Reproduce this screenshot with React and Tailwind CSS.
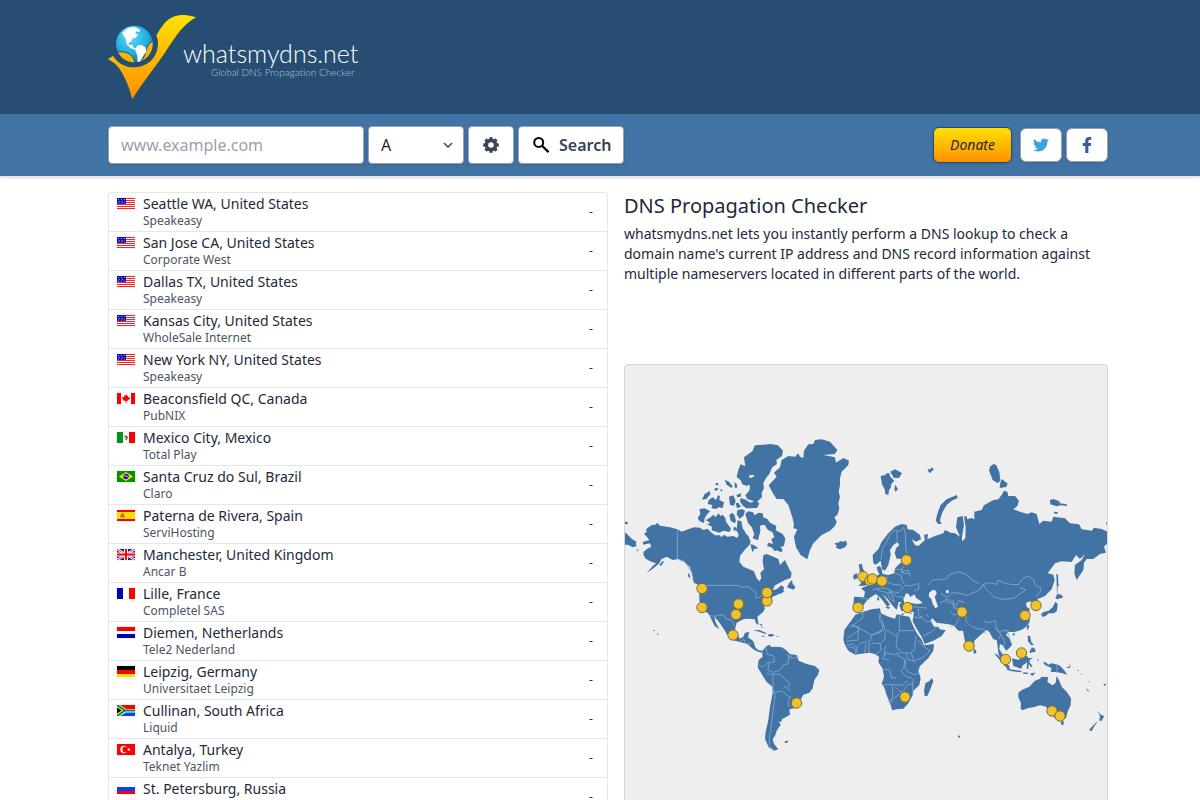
import { FaFacebookF, FaTwitter } from "react-icons/fa";

const servers = [
  ["us", "Seattle WA, United States", "Speakeasy"],
  ["us", "San Jose CA, United States", "Corporate West"],
  ["us", "Dallas TX, United States", "Speakeasy"],
  ["us", "Kansas City, United States", "WholeSale Internet"],
  ["us", "New York NY, United States", "Speakeasy"],
  ["ca", "Beaconsfield QC, Canada", "PubNIX"],
  ["mx", "Mexico City, Mexico", "Total Play"],
  ["br", "Santa Cruz do Sul, Brazil", "Claro"],
  ["es", "Paterna de Rivera, Spain", "ServiHosting"],
  ["gb", "Manchester, United Kingdom", "Ancar B"],
  ["fr", "Lille, France", "Completel SAS"],
  ["nl", "Diemen, Netherlands", "Tele2 Nederland"],
  ["de", "Leipzig, Germany", "Universitaet Leipzig"],
  ["za", "Cullinan, South Africa", "Liquid"],
  ["tr", "Antalya, Turkey", "Teknet Yazlim"],
  ["ru", "St. Petersburg, Russia", "Rostelecom"],
];

const flags = {
  us: (
    <>
      <path fill="#fff" d="M0 0h18v11H0z" />
      <path fill="#f22" d="M0 0h18v1H0zM0 2h18v1H0zM0 4h18v1H0zM0 6h18v1H0zM0 8h18v1H0zM0 10h18v1H0z" />
      <path fill="#1414a8" d="M0 0h9v6H0z" />
      <path stroke="#8f9ee8" strokeDasharray="1 2" d="M1 1.5h7M2 3.5h6M1 5h7" />
    </>
  ),
  ca: (
    <>
      <path fill="#fff" d="M0 0h18v11H0z" />
      <path fill="#f00" d="M0 0h4v11H0zM14 0h4v11h-4zM9 1l1 2 1-.5v2l2-.5-.5 2-2 2-1-.2V10h-1V7.800l-1 .2-2-2L5 4l2 .5v-2L8 3z" />
    </>
  ),
  mx: (
    <>
      <path fill="#fff" d="M0 0h18v11H0z" />
      <path fill="#009321" d="M0 0h6v11H0z" />
      <path fill="#f00" d="M12 0h6v11h-6z" />
      <path fill="#7b6a40" d="M7 5l2-2 2 2-1 3H8l1-2z" />
    </>
  ),
  br: (
    <>
      <path fill="#009300" d="M0 0h18v11H0z" />
      <path fill="#ffe000" d="M9 1l7 4.500L9 10 2 5.500z" />
      <circle cx="9" cy="5.500" r="2.800" fill="#1414a8" />
      <path stroke="#fff" strokeWidth=".8" fill="none" d="M6.500 5q3-1 5 1.500" />
    </>
  ),
  es: (
    <>
      <path fill="#f00" d="M0 0h18v11H0z" />
      <path fill="#ffdf00" d="M0 2h18v7H0z" />
      <path fill="#c66a3c" d="M4 4l1.500-1L7 4l1 3.500H3z" />
    </>
  ),
  gb: (
    <>
      <path fill="#1414a8" d="M0 0h18v11H0z" />
      <path stroke="#fff" strokeWidth="2.400" d="M0 0l18 11M18 0L0 11" />
      <path stroke="#f00" strokeWidth=".8" d="M0 0l18 11M18 0L0 11" />
      <path stroke="#fff" strokeWidth="4" d="M9 0v11M0 5.500h18" />
      <path stroke="#f00" strokeWidth="2" d="M9 0v11M0 5.500h18" />
    </>
  ),
  fr: (
    <>
      <path fill="#fff" d="M0 0h18v11H0z" />
      <path fill="#0000b4" d="M0 0h6v11H0z" />
      <path fill="#f00" d="M12 0h6v11h-6z" />
    </>
  ),
  nl: (
    <>
      <path fill="#fff" d="M0 0h18v11H0z" />
      <path fill="#f00" d="M0 0h18v4H0z" />
      <path fill="#0000b4" d="M0 7h18v4H0z" />
    </>
  ),
  de: (
    <>
      <path fill="#000" d="M0 0h18v4H0z" />
      <path fill="#f00" d="M0 4h18v4H0z" />
      <path fill="#ffdf00" d="M0 8h18v3H0z" />
    </>
  ),
  za: (
    <>
      <path fill="#fff" d="M0 0h18v11H0z" />
      <path fill="#f00" d="M3 0h15v4H9z" />
      <path fill="#04f" d="M3 11h15V7.500H9z" />
      <path stroke="#009321" strokeWidth="2" fill="none" d="M0 0l8 5.500L0 11M8 5.500h10" />
      <path fill="#ffdf00" d="M0 1.500l6 4-6 4z" />
      <path fill="#000" d="M0 2.500l4.500 3L0 8.500z" />
    </>
  ),
  tr: (
    <>
      <path fill="#f00" d="M0 0h18v11H0z" />
      <circle cx="7" cy="5.500" r="3.700" fill="#fff" />
      <circle cx="8.300" cy="5.500" r="2.900" fill="#f00" />
      <path fill="#fff" d="M10 5.500l1.200-.5.300-1.200.8 1 1.200-.2-.7.900.7 1-1.200-.2-.8.900-.3-1.200z" />
    </>
  ),
  ru: (
    <>
      <path fill="#fff" d="M0 0h18v11H0z" />
      <path fill="#04f" d="M0 4h18v4H0z" />
      <path fill="#f00" d="M0 8h18v3H0z" />
    </>
  ),
};

const markers = [
  [702, 588.5], [702, 607.5], [738.5, 604], [736, 614.5], [767, 601], [767, 592.5],
  [733, 635], [796.5, 703], [858, 607.5], [863, 576.5], [870, 580.5], [872.5, 579],
  [882, 581], [906.5, 560], [907.5, 607.5], [905, 697], [962, 612], [969, 646],
  [1025, 615.5], [1036, 605.5], [1005.5, 659.5], [1021.5, 653], [1052, 711], [1060, 716],
];

function WorldMap() {
  return (
    <svg className="block w-full" viewBox="625 365 482 450" role="img" aria-label="World map of DNS servers">
      <g transform="translate(620 430) scale(.33333)" fill="#4173a4">
        {/* North and Central America */}
        <path d="M72 312L80 305 78 298 95 285 106 284 112 278 120 287 150 292 172 298 185 305 205 298 222 292 240 293 250 300 262 296 275 308 285 316 300 316 304 322 312 314 322 320 340 318 352 324 358 310 368 302 385 318 392 335 388 345 372 362 360 378 358 395 370 410 388 418 402 424 410 445 418 454 424 445 421 428 432 418 428 395 430 375 440 372 460 380 475 387 480 405 495 390 508 418 515 430 512 444 495 450 480 458 465 466 458 480 470 478 484 466 492 472 490 482 472 494 458 500 445 515 432 527 435 535 430 545 412 560 416 585 408 580 404 568 385 566 370 568 350 578 345 598 352 615 360 626 370 620 375 608 388 606 384 622 400 634 406 652 414 660 427 662 424 668 410 664 398 656 382 642 360 636 345 632 320 612 310 595 295 574 283 560 286 575 298 598 284 588 275 570 268 555 262 548 245 540 238 510 238 478 232 462 218 440 210 412 192 395 175 387 158 390 140 380 124 388 118 400 104 412 80 430 96 410 108 400 90 394 75 385 70 366 82 356 94 350 90 340 70 344 68 336 88 330 82 322z" />
        {/* South America */}
        <path d="M426 664L440 648 450 644 452 651 465 650 485 652 498 660 510 672 530 675 536 692 560 702 585 708 598 720 594 734 583 750 578 775 568 788 550 794 540 812 525 834 508 838 510 854 486 868 484 876 476 874 482 884 470 902 466 915 458 928 462 942 475 958 462 962 445 950 435 926 437 905 445 870 450 830 458 790 457 770 440 756 430 740 413 712 416 690 428 680z" />
        {/* Caribbean, Hawaii, Falklands, Aleutians */}
        <path d="M400 602l16-3 16 7 8 4-4 2-22-8zM445 613l12-1 7 4-10 4-10-2zM470 618h6v2h-6zM425 617h8v3h-7zM420 583l4-2 3 4-4 2zM424 589h3v4h-3zM99 602l4-2 3 2-3 2zM110 610l5 2 1 3-4-1zM492 937l6-5 8 1-5 6zM14 274l8 2 2 6-10 1zM14 306l10 9 12 12 14 9-3 6 3 6-12 4-14-8-10 0zM48 357l8 3-3 4zM70 370l7 4-6 5zM118 405l10-12 4 2-9 13zM204 430l5 2 2 13-6-4zM216 442l15 12 5 10-14-5z" />
        {/* Canadian Arctic archipelago */}
        <path d="M372 82l25-18 8-18 27-2 18-2 24 4 15 16-3 16-17 12 2 12-14 10-9 20-10 12-8 15 2 16-7 13 1 14-16 14-17-5-11-4-6-12 12-13 2-15-15-9-1-10 25-6 5-6-10-1-14 3zM362 103l14 6 2 14 9 10 2 21-7 15-15-6-5-12-12-10 5-22zM344 157l6 4 2 12-8 0zM314 149l13 6 11 14-4 5-14-10zM288 159l7 1-1 6-8-1zM282 177l8-4 6 4-8 6zM246 209l8-17 16-9 1 10-12 14zM266 210l12-8 10 8 6-14 6 2-2 12 14 7-4 17-12-2-8 5-14-2 3-10-14-3zM300 177l7 2-2 8zM327 200l13-4 7 16-5 15-12-2zM349 195l14-5-1 10-10 2zM362 204l15 5 14 9 19-7 8 10-7 13-31 1-10-6-10-14zM347 220l8-2 8 12-12 5zM238 237l16-2 17 9-9 8-8 13-2 14-13-5-6-10 8-12zM270 263l10-9 7 8 8-12 7 8 6-4 8 10 2 11 15 21-4 10-18-4-14 6-22-7 1-11-15-7 10-4-14-9zM328 256l8-8 7 6 5 19-4 7-12-8zM352 241l14-4 9 5-5 16-12 8-8-14zM352 271l12 3 4 21 10 15-7 11-13-4-9-16 3-19zM376 252l8-8 14 2 6 10 12-8 12 2 2 12 12 5 8 11 19 10-2 13 20 10 9 14-4 23-10 2 6 12-4 5-14-6-6 2-10-11-13-4 4-10 14 4-5-14 9-7-6-15-14-7-9-15-14 3 1 17-7 27-16-6 5-13-8-21-11-12zM391 342l12 4 12 9-12 2-6 10zM340 292l8 0 2 9-9 1z" />
        {/* Newfoundland and Nova Scotia */}
        <path d="M501 472L507 460 516 450 518 462 526 470 522 479 512 476zM470 486L484 480 494 484 482 491 474 492z" />
        <g transform="translate(480 0)">
          {/* Greenland, Iceland, Svalbard, Novaya Zemlya, Russian Arctic */}
          <path d="M5 90L25 78 45 80 55 70 60 80 70 84 72 62 85 43 100 42 105 30 125 28 150 35 172 60 165 72 130 75 165 82 168 98 190 84 207 92 205 105 185 125 180 145 180 165 176 185 180 200 175 220 178 235 172 255 163 262 170 275 165 288 150 302 125 315 100 340 90 360 82 388 62 375 48 352 42 320 52 298 40 295 42 284 38 265 25 225 10 207 -10 207 -20 192 -34 166 -10 140 -18 128 0 112z" />
          <path d="M163 340l15-3 2-4 8 2 9-3 5 10-7 10-15 6-12-5 2-6zM302 138l14-3 4-5 8 0 3 10 12 12-9 10-2 12-5 6-2 15-9-3-2-14-8-15zM331 125l14-7 21 11-9 15-16-1zM346 164l8 14-8 7-3-8zM443 118l8 0 5-6 6 8-7 2-2 7-7-3zM530 195L533 204 515 212 500 225 488 245 482 262 480 272 485 282 475 282 467 272 473 248 482 225 500 208z" />
          <path d="M627 121l4-12 10-7 8 4 9 20 3 27-9 6-14-9zM665 147l7 5 11 9-4 10-20 3 2-16zM810 210l10-3 19 7 0 6 21 3 2 5-20-2-12 3-19-6zM822 245l12 2-3 5-9-2zM979 276l8 3 0 5-8 0z" />
          {/* Eurasia */}
          <path d="M280 400L278 375 295 358 305 335 325 310 345 290 365 282 380 285 383 298 400 300 420 315 423 328 408 335 395 328 405 345 415 348 435 330 432 315 444 312 442 328 465 318 490 310 495 300 512 308 525 310 540 320 528 292 532 262 548 258 552 285 546 320 546 334 556 325 557 290 552 260 559 258 562 268 574 264 583 268 583 245 605 240 612 226 640 210 655 208 665 195 672 182 682 185 685 198 705 198 717 212 712 228 700 238 720 245 742 252 755 247 770 252 778 282 790 272 815 275 820 260 855 265 870 280 897 283 905 298 935 302 942 293 965 297 982 305 982 340 972 350 978 368 960 372 940 387 920 387 912 398 910 420 890 450 883 430 885 405 905 390 915 372 900 387 888 375 875 396 845 394 825 400 803 430 820 434 824 450 815 478 795 498 772 508 776 520 778 532 768 538 762 524 752 514 738 518 740 530 750 538 744 552 750 572 742 588 724 600 702 606 686 606 678 614 690 628 696 645 688 654 678 662 670 648 660 642 658 658 674 682 682 698 670 692 656 675 653 650 650 630 640 628 628 606 620 600 605 612 583 632 582 655 570 665 555 635 549 602 535 602 520 586 500 582 470 578 456 564 452 572 462 590 474 590 480 598 497 601 485 618 460 632 434 642 425 620 410 596 398 574 402 545 385 545 364 542 358 526 364 516 356 516 350 540 336 524 322 506 306 490 330 524 322 530 304 506 288 492 274 500 262 510 250 526 243 538 225 542 220 525 222 500 252 502 255 485 243 475 268 465 282 445 298 432 295 415 303 410 308 432 325 435 343 430 345 415 362 398 378 397 362 386 350 386 344 370 348 355 358 345 352 337 340 345 330 360 332 375 325 405 315 422 306 418 302 392 288 404z" />
          {/* British Isles, Denmark, Mediterranean islands */}
          <path d="M236 403l10-1 2 12 6 14 14 18 3 15-18 6-18 1 9-10-6-12 4-8zM221 435l9-6 3 15-10 5-4-7zM290 412l9-5 2 18-6 4zM295 499l3 10-4 4-3-6zM317 530l13 1-3 6-10-4zM364 551l9-1-2 4-7 0zM388 550l8-2-4 5z" />
          {/* Japan, Sakhalin, Kurils */}
          <path d="M829 433l5 0 1 28 4 7-6-2-1 26 12 2 6 8-18 6-6-4 5-10zM826 515L833 522 831 542 822 550 806 550 797 558 782 556 790 546 806 542 818 532zM785 549l7 1 1 10-5 2zM742 588l4-4 2 3-4 13-4-3zM697 612l7-4 0 7-5 2z" />
          {/* Philippines, Indonesia, New Guinea */}
          <path d="M743 618l7-1 4 20 8 7-8 2-10-12zM756 652l10 5 0 9-11 1-3 3-4-4zM642 670L652 674 670 690 688 708 690 722 680 714 664 696zM680 716l20 3 24 4 0 4-28-3-15-5zM696 685L716 690 730 676 745 680 738 700 728 706 724 716 700 708zM737 690l5-5 18-2-10 6-2 8 10 12-4 3-8-10-1 15-5-1 1-17zM730 727l14 1-1 4-14-1zM752 730l14-2-8 9-6-2zM772 686l4 3-3 6zM788 696L800 698 804 704 816 700 838 706 850 718 862 734 842 728 826 726 812 726 815 714 796 706zM868 702l3 4-4-1zM866 710l8-3-6 7-10 0zM892 718l6 5-4 0zM902 728l6 6-5-2zM582 655l8 9-4 7-6-2z" />
          {/* Australia and New Zealand */}
          <path d="M715 788L725 780 748 770 765 752 780 746 785 740 805 742 802 756 818 766 827 758 830 738 838 752 845 770 860 785 873 805 872 825 863 845 858 864 845 872 825 864 810 850 798 830 780 826 760 832 745 834 728 841 722 836 723 820 715 802zM842 875L852 873 850 886 844 884zM952 842L962 854 973 858 965 872 958 872 960 858zM954 872L942 890 935 904 927 900 940 886zM926 752l3 5-4-1zM918 774l9 8-3 3zM970 765l7-5 1 5-5 3zM534 916l6 2-1 5-5-1z" />
          {/* Africa and Madagascar */}
          <path d="M226 554L250 545 275 538 300 535 303 550 325 560 345 566 350 553 375 558 388 560 400 590 412 612 424 628 432 646 462 642 460 662 445 684 420 708 415 722 422 744 418 765 400 782 398 796 385 820 370 836 350 838 337 841 330 820 320 796 312 770 305 762 312 740 308 716 295 696 297 680 285 672 268 668 245 671 225 674 205 662 195 645 190 630 193 600 215 570zM456 744L460 754 451 778 442 798 434 798 432 783 436 760 448 753z" />
          {/* Inland seas */}
          <path fill="#eee" d="M370 508l8-18 8 2 5 9 12-8 5 10 14 10 6 7-18 2-18-3-18 4zM448 488l10-9 10 3 2 10-6 8 6 18 4 12-8 5-8-14-4-14-8-8zM497 482l8-3 2 8-7 4z" />
        </g>
        {/* National borders */}
        <g fill="none" stroke="#87abd0" strokeWidth="2.500" strokeLinejoin="round">
          <path d="M172 298v87l10 8 6-4 12 14 8 14 10 14M240 466h112l14 6 18-2 14 10 10 8 1 16 10-2 12-10M270 557l16 2 10 -3 14-2 10 14 14 2 10 18" />
          <path d="M362 632l10-3 4 10M382 640l12 2M438 655l4 18 18 4 4 18-18 4-2 22 16 6 20-6 10-16 14-4 4-30M416 705l14 6 16-16M440 730l18 4 20-2 16 14 14 12 0 14M456 785l10 2 20-4 16 14 10 4M458 735l2 50 6 10-6 40-6 50-6 40 0 22 14 14M490 775l8-6 14 16M512 800l-8 14 4 18M500 673l10 12 26-3M517 672l-4 10" />
          <g transform="translate(480 0)">
            <path d="M303 390l4-35 12-18 12-25 14-12 16 4 10-12 6 24 0 40 4 14M350 305l2 30M345 418h20l4 14 20-2M345 430l20 8 0 12 12 18 20-2 18-6 2 16-14 6M320 438l2 18 20 8 16 0 12 10-14 14-16-2-14-8-16-4-20 2-12 4M290 478l16 6 16 4 14 0 14 12 24 2M328 480l10 22M322 490l8 16 14 10M340 500l0 16M445 465l14-16 26 0 18-4 2-10 30-10 24 8 16 16 22 12M370 408l-6 20 20-8 8 20M240 503l14 3 14 2" />
            <path d="M609 464l16-6 26 5 4-13 20 10 22 4 18 0 14-18 14-8 18 10 4 18 18 8-2 12-14 14M609 464l14 18 18 18 24 8 36-3 36-25-18-8M609 464l-8 14-16 8-24 10-20-6-24-2-16 14-20-12M494 506l18 6 18 14 6-14 18 6M520 510l0 22 20 12 8-8M480 520l12-8 22 8 14 14 18 6M510 545l12 10 20-8M548 545l10 10 0 20 16 14 20 8 18 0 4 14M538 560l-10 24-16 6M612 574l16 4 18-6 2 20 14 20 12 22-4 18M646 594l12 14 14-8 14 12 4 18 4 8M662 615l-6 12M674 600l14 4M395 530l20 2 26 2M415 535l0 20 24 20 18-2M440 552l6 10M400 560l16 4 12-6M429 618l28-14 12-12M831 701v26" />
            <path d="M250 545l-4 20-20 16-12 6M212 590h24v12l-36 24M218 585l58 30 38-18-14-44M236 590l-2 40-36 4M300 550l-2 18 10 20-4 18-28 9M276 615l-6 18-28 6-14 14M358 558v44h46M318 600l32 18 6-14M316 600l-2 28-14 14M198 646l20-4 14 12-6 18M206 650l16 4 10 16M258 640l-4 28M268 638l-2 30M274 640l26 0 4 20-18 14M318 647l-6 20 4 10M352 618l-4 30 18 20 24 2 14-12 4-40M362 668l-22 6-24-6-8 18 20 4M394 670l8 24 28-12 20-20-22-14-14-18M402 694l-18-6-6-18M378 690l-4 20 8 14 20 10 14-4M350 674l24 14 0 16-10 20 14 16 12 2M310 718l20 2 4 24 14 0M306 764l40 0 20 2 16-14M338 766v34l-8 16-6-2M345 770l16 16 10-4 12-18 14-2 2 28M361 790l-20 16-12 14M389 740l12 10-4 14" />
          </g>
        </g>
      </g>
      <g fill="#f0c22f" stroke="#7d702d" strokeWidth="1">
        {markers.map(([x, y]) => (
          <circle key={x + "-" + y} cx={x} cy={y} r="5.200" />
        ))}
      </g>
    </svg>
  );
}

function LogoMark() {
  return (
    <svg className="h-[90px] w-[75px] shrink-0 overflow-visible" viewBox="24 36 225 270" aria-hidden="true">
      <defs>
        <linearGradient id="tick" x1="0" y1="0" x2="0" y2="1">
          <stop offset="0" stopColor="#ffe100" />
          <stop offset="1" stopColor="#ff9000" />
        </linearGradient>
        <radialGradient id="globe" cx=".4" cy=".3" r=".75">
          <stop offset="0" stopColor="#5fdcff" />
          <stop offset=".6" stopColor="#21b0de" />
          <stop offset="1" stopColor="#126fa8" />
        </radialGradient>
        <clipPath id="disc"><circle cx="103" cy="132" r="55" /></clipPath>
      </defs>
      <path fill="url(#tick)" d="M24 178l15-11c15 24 36 35 65 35 41-1 70-31 70-72 0-9-2-17-5-24 20-31 34-61 81-61 14 0 28 3 38 7-39 22-61 57-86 95-30 47-74 100-105 150-10-36-24-74-47-101-8-7-16-13-26-18z" />
      <circle cx="103" cy="132" r="55" fill="url(#globe)" />
      <g clipPath="url(#disc)">
        <path fill="#ffb400" stroke="#264d72" strokeWidth="3" d="M48 160c15-12 52-2 57 28l-15 12-40-15zM160 122c-12 7-19 17-21 28-3 16-9 25-16 34l20 6 24-38z" />
        <path fill="#fff" d="M76 90c8-8 18-11 30-8l14 7-2 8-9-3-3 8 9 2-10 10-7 1-5 11-7 1 1 8 10-1 3 8 8 3-2 4-14-4-12-13-2-14-8-12-4-8zM111 137l12-3 15 9 1 12-9 12-10 20-7 1-1-20-6-17z" />
      </g>
    </svg>
  );
}

const teeth = [0, 45, 90, 135, 180, 225, 270, 315];

const control =
  "h-[38px] rounded border border-gray-400 bg-white text-base shadow-sm";
const social =
  "flex h-[34px] w-[42px] items-center justify-center rounded-md border border-gray-400 bg-white shadow-sm";

export default function App() {
  return (
    <div className="min-h-screen bg-white font-['Noto_Sans',sans-serif] text-gray-800">
      <header className="bg-[#264d72]">
        <div className="mx-auto max-w-[1024px] pl-5 pr-1">
          <a href="#home" className="inline-flex items-start py-3 align-top">
            <LogoMark />
            <span className="flex flex-col items-end pt-[27px] font-[Lato,sans-serif] font-light">
              <span className="text-[25px] leading-7 text-white">whatsmydns.net</span>
              <span className="pr-1 text-[10px] leading-[10px] text-[#b5c5d5]">Global DNS Propagation Checker</span>
            </span>
          </a>
        </div>
      </header>

      <div className="border-b border-gray-200 bg-[#4173a4] shadow-sm">
        <div className="mx-auto flex max-w-[1024px] items-center justify-between py-3 pl-5 pr-1">
          <form className="flex gap-1" onSubmit={(e) => e.preventDefault()}>
            <input
              type="text"
              aria-label="Domain name"
              placeholder="www.example.com"
              className={control + " w-64 px-3 placeholder:text-gray-400"}
            />
            <div className="relative">
              <select aria-label="Record type" defaultValue="A" className={control + " w-24 appearance-none px-3"}>
                <option>A</option>
                <option>AAAA</option>
                <option>CNAME</option>
                <option>MX</option>
                <option>NS</option>
                <option>TXT</option>
              </select>
              <svg className="pointer-events-none absolute right-2 top-[11px] size-4" viewBox="0 0 16 16" fill="none" stroke="#4a5568" strokeWidth="1.700" aria-hidden="true">
                <path d="M4 6l4 4 4-4" />
              </svg>
            </div>
            <button type="button" aria-label="Settings" className={control + " flex w-[46px] items-center justify-center"}>
              <svg className="size-4" viewBox="0 0 16 16" fill="none" stroke="#3d4657" aria-hidden="true">
                <circle cx="8" cy="8" r="4.600" strokeWidth="3.600" />
                {teeth.map((a) => (
                  <path key={a} strokeWidth="3.200" d="M8 .2v2.500" transform={"rotate(" + a + " 8 8)"} />
                ))}
              </svg>
            </button>
            <button type="submit" className={control + " flex items-center gap-2 px-3 font-semibold text-gray-700"}>
              <svg className="size-5" viewBox="0 0 20 20" fill="none" stroke="#000" strokeWidth="2" aria-hidden="true">
                <circle cx="7.700" cy="7.400" r="4.500" />
                <path strokeWidth="2.200" d="M11 10.700l6.500 6.400" />
              </svg>
              Search
            </button>
          </form>
          <div className="flex items-center gap-1">
            <button type="button" className="mr-1 h-9 rounded-md border border-[#264d72] bg-linear-to-b from-[#ffe100] to-[#ff9000] px-4 text-sm italic shadow-sm">
              Donate
            </button>
            <a href="#twitter" aria-label="Twitter" className={social}><FaTwitter className="size-4 text-[#38a5dd]" /></a>
            <a href="#facebook" aria-label="Facebook" className={social}><FaFacebookF className="size-4 text-[#3b5998]" /></a>
          </div>
        </div>
      </div>

      <main className="mx-auto grid max-w-[1024px] grid-cols-2 pl-5 pr-1 pt-[15px]">
        <table className="w-full border-separate border-spacing-0 self-start rounded border border-b-0 border-gray-200">
          <tbody>
            {servers.map(([flag, place, provider]) => (
              <tr key={place}>
                <td className="w-[34px] border-b border-gray-200 pl-2 pt-[5px] align-top">
                  <svg className="h-[11px] w-[18px] outline outline-gray-100" viewBox="0 0 18 11" aria-hidden="true">{flags[flag]}</svg>
                </td>
                <td className="border-b border-gray-200 pb-[2px] pt-[2px]">
                  <div className="text-sm leading-[18px]">{place}</div>
                  <div className="text-xs leading-4 text-gray-600">{provider}</div>
                </td>
                <td className="w-8 border-b border-gray-200 text-center text-xs">-</td>
              </tr>
            ))}
          </tbody>
        </table>

        <div className="pl-4">
          <h1 className="text-xl leading-7">DNS Propagation Checker</h1>
          <p className="mt-1 text-sm leading-5">
            whatsmydns.net lets you instantly perform a DNS lookup to check a domain name's current IP address and DNS
            record information against multiple nameservers located in different parts of the world.
          </p>
          <div className="mt-20 overflow-hidden rounded border border-gray-300 bg-[#eee]">
            <WorldMap />
          </div>
        </div>
      </main>
    </div>
  );
}
